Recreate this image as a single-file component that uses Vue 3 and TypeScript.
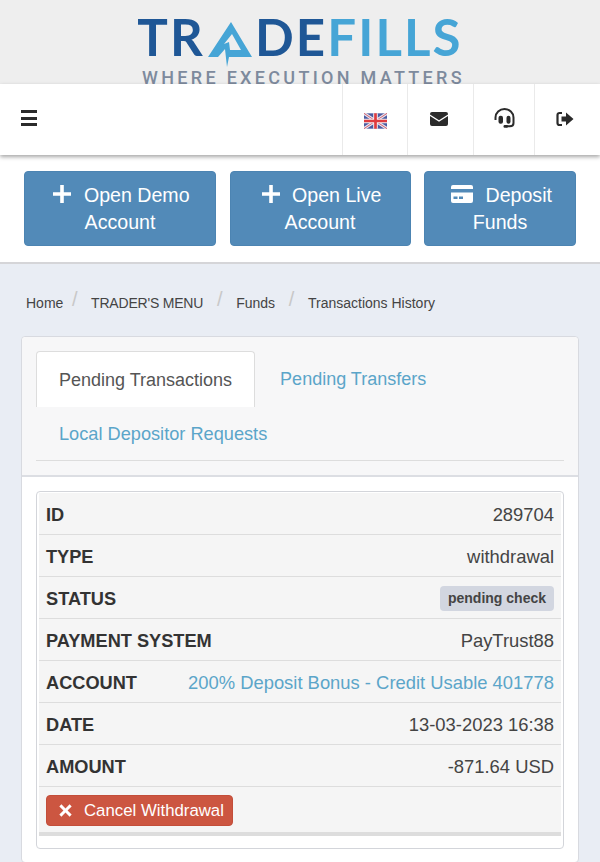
<script setup lang="ts">
// Static rows of the pending transaction card
interface Row {
  label: string
  value: string
  kind?: 'badge' | 'link'
}

const crumbs = ['Home', "TRADER'S MENU", 'Funds', 'Transactions History']

const rows: Row[] = [
  { label: 'ID', value: '289704' },
  { label: 'TYPE', value: 'withdrawal' },
  { label: 'STATUS', value: 'pending check', kind: 'badge' },
  { label: 'PAYMENT SYSTEM', value: 'PayTrust88' },
  { label: 'ACCOUNT', value: '200% Deposit Bonus - Credit Usable 401778', kind: 'link' },
  { label: 'DATE', value: '13-03-2023 16:38' },
  { label: 'AMOUNT', value: '-871.64 USD' }
]
</script>

<template>
  <div class="page">
    <!-- Logo strip -->
    <header class="brand">
      <div class="logo">
        <div class="logo-word">
          <span class="dark">TR</span>
          <svg class="logo-a" viewBox="0 0 44 50" width="44" height="50">
            <path fill="#46a5d6" fill-rule="evenodd" d="M23 0 L44 35 L21 35 L19 45 L17 27 L10 35 L0 35 Z M24 12 L33 28 L22 28 L21 20 L16 22 Z" />
          </svg>
          <span class="dark">DE</span><span class="light">FILLS</span>
        </div>
        <div class="tagline">WHERE EXECUTION MATTERS</div>
      </div>
    </header>

    <!-- Top navigation -->
    <nav class="topbar">
      <button class="burger" aria-label="Menu"><span></span><span></span><span></span></button>
      <div class="nav-icons">
        <div class="nav-cell flag-cell">
          <svg viewBox="0 0 60 40" width="23" height="16">
            <rect width="60" height="40" fill="#4a5aa0" />
            <path d="M0 0 L60 40 M60 0 L0 40" stroke="#e8e4ee" stroke-width="8" />
            <path d="M0 0 L60 40 M60 0 L0 40" stroke="#d05a6a" stroke-width="2.5" />
            <path d="M30 0 V40 M0 20 H60" stroke="#f2eef2" stroke-width="12" />
            <path d="M30 0 V40 M0 20 H60" stroke="#df3b3f" stroke-width="7" />
          </svg>
        </div>
        <div class="nav-cell mail-cell">
          <svg viewBox="0 0 18 14" width="18" height="14">
            <path fill="#2b2b2b" d="M2 0 H16 A2 2 0 0 1 18 2 V2.4 L9 8.2 L0 2.4 V2 A2 2 0 0 1 2 0 Z M0 4 L9 9.8 L18 4 V12 A2 2 0 0 1 16 14 H2 A2 2 0 0 1 0 12 Z" />
          </svg>
        </div>
        <div class="nav-cell support-cell">
          <svg viewBox="0 0 21 21" width="21" height="21">
            <path fill="none" stroke="#2b2b2b" stroke-width="2" d="M1.5 12 V9.5 A9 8.5 0 0 1 19.5 9.5 V15 Q19.5 18.3 16 18.3 H12" />
            <rect x="4.5" y="7.7" width="4.5" height="8" rx="2" fill="#2b2b2b" />
            <rect x="12.5" y="7.7" width="4" height="8" rx="2" fill="#2b2b2b" />
            <rect x="9.5" y="17" width="4.5" height="2.8" rx="1.2" fill="#2b2b2b" />
          </svg>
        </div>
        <div class="nav-cell logout-cell">
          <svg viewBox="0 0 18 16" width="18" height="16">
            <path fill="none" stroke="#2b2b2b" stroke-width="2.2" d="M6 2 H3.5 A2 2 0 0 0 1.5 4 V12 A2 2 0 0 0 3.5 14 H6" />
            <path fill="#2b2b2b" d="M5.5 5.5 H10 V1.5 L17.5 8 L10 14.5 V10.5 H5.5 Z" />
          </svg>
        </div>
      </div>
    </nav>

    <!-- Account actions -->
    <section class="actions">
      <a class="action">
        <svg class="ico-plus" viewBox="0 0 16 16" width="18" height="18"><path fill="#fff" d="M6.4 0 H9.6 V6.4 H16 V9.6 H9.6 V16 H6.4 V9.6 H0 V6.4 H6.4 Z" /></svg>
        Open Demo Account
      </a>
      <a class="action">
        <svg class="ico-plus" viewBox="0 0 16 16" width="18" height="18"><path fill="#fff" d="M6.4 0 H9.6 V6.4 H16 V9.6 H9.6 V16 H6.4 V9.6 H0 V6.4 H6.4 Z" /></svg>
        Open Live Account
      </a>
      <a class="action">
        <svg class="ico-card" viewBox="0 0 22 18" width="22" height="18">
          <path fill="#fff" d="M2 0 H20 A2 2 0 0 1 22 2 V4 H0 V2 A2 2 0 0 1 2 0 Z M0 7.5 H22 V16 A2 2 0 0 1 20 18 H2 A2 2 0 0 1 0 16 Z" />
          <rect x="2.5" y="11.5" width="4" height="2.5" fill="#528ab8" />
          <rect x="8" y="11.5" width="4" height="2.5" fill="#528ab8" />
        </svg>
        Deposit Funds
      </a>
    </section>

    <main class="content">
      <ol class="crumbs">
        <li v-for="c in crumbs" :key="c">{{ c }}</li>
      </ol>

      <div class="panel">
        <div class="panel-head">
          <ul class="tabs">
            <li class="tab active">Pending Transactions</li>
            <li class="tab">Pending Transfers</li>
            <li class="tab">Local Depositor Requests</li>
          </ul>
        </div>
        <div class="panel-body">
          <div class="card">
            <div class="rows">
              <div v-for="r in rows" :key="r.label" class="row">
                <strong>{{ r.label }}</strong>
                <span v-if="r.kind === 'badge'" class="badge">{{ r.value }}</span>
                <a v-else-if="r.kind === 'link'" class="link">{{ r.value }}</a>
                <span v-else>{{ r.value }}</span>
              </div>
              <div class="row-action">
                <a class="cancel">
                  <svg viewBox="0 0 12 12" width="13" height="13">
                    <path fill="#fff" d="M2.2 0.3 L6 4.1 L9.8 0.3 L11.7 2.2 L7.9 6 L11.7 9.8 L9.8 11.7 L6 7.9 L2.2 11.7 L0.3 9.8 L4.1 6 L0.3 2.2 Z" />
                  </svg>
                  Cancel Withdrawal
                </a>
              </div>
            </div>
          </div>
        </div>
      </div>
    </main>
  </div>
</template>

<style>
html, body {
  margin: 0;
  background: #e9edf4;
}
</style>

<style scoped>
.page {
  width: 600px;
  height: 862px;
  overflow: hidden;
  font-family: "Liberation Sans", Arial, sans-serif;
  color: #333;
  background: #e9edf4;
}

/* Logo strip */
.brand {
  height: 84px;
  background: #eeeeee;
  display: flex;
  justify-content: center;
}
.logo {
  width: 340px;
  padding-top: 15px;
  box-sizing: border-box;
  display: flex;
  flex-direction: column;
  align-items: center;
}
.logo-word {
  height: 50px;
  display: flex;
  align-items: flex-start;
  font-family: Lato, sans-serif;
  font-weight: 700;
  font-size: 51px;
  line-height: 44px;
  letter-spacing: 2.1px;
  white-space: nowrap;
}
.logo-a {
  margin: 7px 3px 0 3px;
}
.dark {
  color: #1f5796;
}
.light {
  color: #46a5d6;
}
.tagline {
  margin: 7px 0 0 7px;
  font-family: Roboto, sans-serif;
  font-weight: 500;
  font-size: 18px;
  line-height: 12px;
  letter-spacing: 3.3px;
  color: #7d8a9d;
  white-space: nowrap;
}

/* Top navigation */
.topbar {
  position: relative;
  height: 71px;
  background: #fff;
  box-shadow: 0 2px 4px rgba(0, 0, 0, 0.35);
  display: flex;
  justify-content: space-between;
}
.burger {
  margin: 26px 0 0 21px;
  padding: 0;
  width: 16px;
  height: 16px;
  border: 0;
  background: none;
  display: flex;
  flex-direction: column;
  justify-content: space-between;
}
.burger span {
  display: block;
  height: 3px;
  background: #2b2b2b;
}
.nav-icons {
  display: flex;
}
.nav-cell {
  height: 71px;
  border-left: 1px solid #eaeaea;
  box-sizing: border-box;
  display: flex;
  justify-content: center;
  padding-top: 27px;
}
.flag-cell {
  width: 65px;
  padding-top: 29px;
}
.mail-cell {
  width: 66px;
  padding: 28px 4px 0 0;
}
.support-cell {
  width: 61px;
  padding-top: 24px;
}
.logout-cell {
  width: 66px;
  padding-right: 5px;
}

/* Account actions */
.actions {
  height: 109px;
  box-sizing: border-box;
  padding: 16px 24px 0;
  background: #fff;
  border-bottom: 2px solid #d5d5d8;
  display: grid;
  grid-template-columns: 192px 181px 152px;
  justify-content: space-between;
  align-items: start;
}
.action {
  height: 75px;
  box-sizing: border-box;
  padding: 10px 14px 0;
  border-radius: 4px;
  background: #528ab8;
  border: 1px solid #4c84b2;
  color: #fff;
  font-size: 19.6px;
  line-height: 27px;
  text-align: center;
}
.ico-plus,
.ico-card {
  margin: 0 7px 0 3px;
  vertical-align: -1px;
}

/* Breadcrumb and panel */
.content {
  padding: 0 21px;
}
.crumbs {
  list-style: none;
  margin: 0;
  padding: 30px 0 0 5px;
  height: 72px;
  box-sizing: border-box;
  display: flex;
  font-size: 14px;
  line-height: 18px;
  color: #444;
}
.crumbs li {
  white-space: nowrap;
}
.crumbs li:nth-child(2) {
  letter-spacing: -0.2px;
}
.crumbs li + li::before {
  content: "/";
  color: #c8c8c8;
  font-size: 20px;
  line-height: 0;
  padding: 0 13.7px;
  position: relative;
  top: -2px;
}
.crumbs li:nth-child(2)::before {
  padding-left: 8.7px;
}
.panel {
  background: #fff;
  border: 1px solid #d8dae0;
  border-radius: 4px;
}
.panel-head {
  height: 140px;
  box-sizing: border-box;
  padding: 14px 14px 0;
  background: #f7f7f8;
  border-bottom: 2px solid #dcdee3;
  border-radius: 4px 4px 0 0;
}
.tabs {
  list-style: none;
  margin: 0;
  padding: 0;
  height: 109px;
  display: flex;
  flex-wrap: wrap;
  align-content: flex-start;
  border-bottom: 1px solid #dddddd;
}
.tab {
  height: 56px;
  box-sizing: border-box;
  padding: 0 23px;
  font-size: 18px;
  line-height: 56px;
  color: #5ba5c9;
  white-space: nowrap;
}
.tab:last-child {
  height: 53px;
  line-height: 54px;
  font-size: 18.2px;
}
.tab.active {
  background: #fff;
  color: #555;
  border: 1px solid #dddddd;
  border-bottom: 0;
  border-radius: 4px 4px 0 0;
  padding: 0 22px;
  margin-right: 2px;
}
.panel-body {
  padding: 14px 14px 13px;
}
.card {
  border: 1px solid #d3d5da;
  border-radius: 4px;
  padding: 1px 2px 12px;
}
.rows {
  background: #f5f5f5;
  border-bottom: 4px solid #dddddd;
  font-size: 18.4px;
}
.row {
  height: 42px;
  box-sizing: border-box;
  padding: 2px 7px 0;
  display: flex;
  justify-content: space-between;
  align-items: center;
  border-bottom: 1px solid #dddddd;
  color: #444;
}
.row strong {
  margin-top: 2px;
  font-size: 18.2px;
  color: #333;
}
.link {
  color: #5ba5c9;
}
.badge {
  background: #d2d6e0;
  color: #444;
  font-size: 14px;
  font-weight: 700;
  line-height: 25px;
  padding: 0 8px;
  border-radius: 4px;
}
.row-action {
  padding: 8px 7px 6px;
  line-height: 0;
}
.cancel {
  display: inline-flex;
  align-items: center;
  gap: 12px;
  height: 31px;
  box-sizing: border-box;
  padding: 0 8px 0 12px;
  border-radius: 4px;
  background: #cc5641;
  border: 1px solid #c34e3a;
  color: #fff;
  font-size: 16.8px;
  line-height: 20px;
}
</style>
